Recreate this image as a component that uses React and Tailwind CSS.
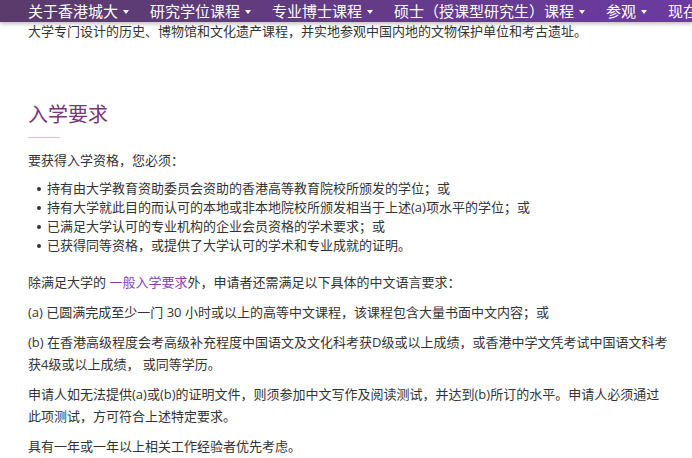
import React from 'react';

const navItems = [
  { label: '关于香港城大', arrow: true },
  { label: '研究学位课程', arrow: true },
  { label: '专业博士课程', arrow: true },
  { label: '硕士（授课型研究生）课程', arrow: true },
  { label: '参观', arrow: true },
  { label: '现在', arrow: false },
];

const requirements = [
  '持有由大学教育资助委员会资助的香港高等教育院校所颁发的学位；或',
  '持有大学就此目的而认可的本地或非本地院校所颁发相当于上述(a)项水平的学位；或',
  '已满足大学认可的专业机构的企业会员资格的学术要求；或',
  '已获得同等资格，或提供了大学认可的学术和专业成就的证明。',
];

const App = () => {
  return (
    <div
      className="relative w-[692px] h-[458px] overflow-hidden bg-white text-[#333] text-[13px]"
      style={{ fontFamily: '"Open Sans", "Noto Sans CJK SC", sans-serif' }}
    >
      {/* Top nav (sticky over content) */}
      <nav className="absolute top-0 left-0 right-0 z-10 h-[22px] bg-gradient-to-r from-[#5a3b6b] to-[#6c3aa0] shadow-[0_2px_4px_rgba(0,0,0,0.25)] overflow-hidden">
        <ul className="flex items-center h-full pl-[28px] gap-[21px] whitespace-nowrap text-white text-[15px] leading-[20px]">
          {navItems.map((item) => (
            <li key={item.label} className="flex items-center">
              {item.label}
              {item.arrow && (
                <span className="ml-[5px] mt-[2px] w-0 h-0 border-l-[3.5px] border-r-[3.5px] border-t-[4px] border-l-transparent border-r-transparent border-t-white" />
              )}
            </li>
          ))}
        </ul>
      </nav>

      {/* Content */}
      <div className="pt-[20px] pl-[28px] w-[670px]">
        <p className="leading-[22px]">
          大学专门设计的历史、博物馆和文化遗产课程，并实地参观中国内地的文物保护单位和考古遗址。
        </p>

        <h2 className="mt-[59px] text-[20px] leading-[28px] text-[#7a3577]">入学要求</h2>
        <div className="mt-[8px] h-px w-[32px] bg-[#dcbcdc]" />

        <p className="mt-[11px] leading-[22px]">要获得入学资格，您必须：</p>

        <ul className="mt-[8px]">
          {requirements.map((req) => (
            <li key={req} className="flex items-center leading-[19px]">
              <span className="ml-[9px] mr-[6px] w-[4px] h-[4px] rounded-full bg-[#333] shrink-0" />
              {req}
            </li>
          ))}
        </ul>

        <div className="mt-[16px] flex flex-col gap-[8px] leading-[22px]">
          <p>
            除满足大学的 <span className="text-[#8a3db3]">一般入学要求</span>外，申请者还需满足以下具体的中文语言要求：
          </p>
          <p>(a) 已圆满完成至少一门 30 小时或以上的高等中文课程，该课程包含大量书面中文内容；或</p>
          <p>
            (b) 在香港高级程度会考高级补充程度中国语文及文化科考获D级或以上成绩，或香港中学文凭考试中国语文科考
            <br />
            获4级或以上成绩， 或同等学历。
          </p>
          <p>
            申请人如无法提供(a)或(b)的证明文件，则须参加中文写作及阅读测试，并达到(b)所订的水平。申请人必须通过
            <br />
            此项测试，方可符合上述特定要求。
          </p>
          <p>具有一年或一年以上相关工作经验者优先考虑。</p>
        </div>
      </div>
    </div>
  );
};

export default App;
